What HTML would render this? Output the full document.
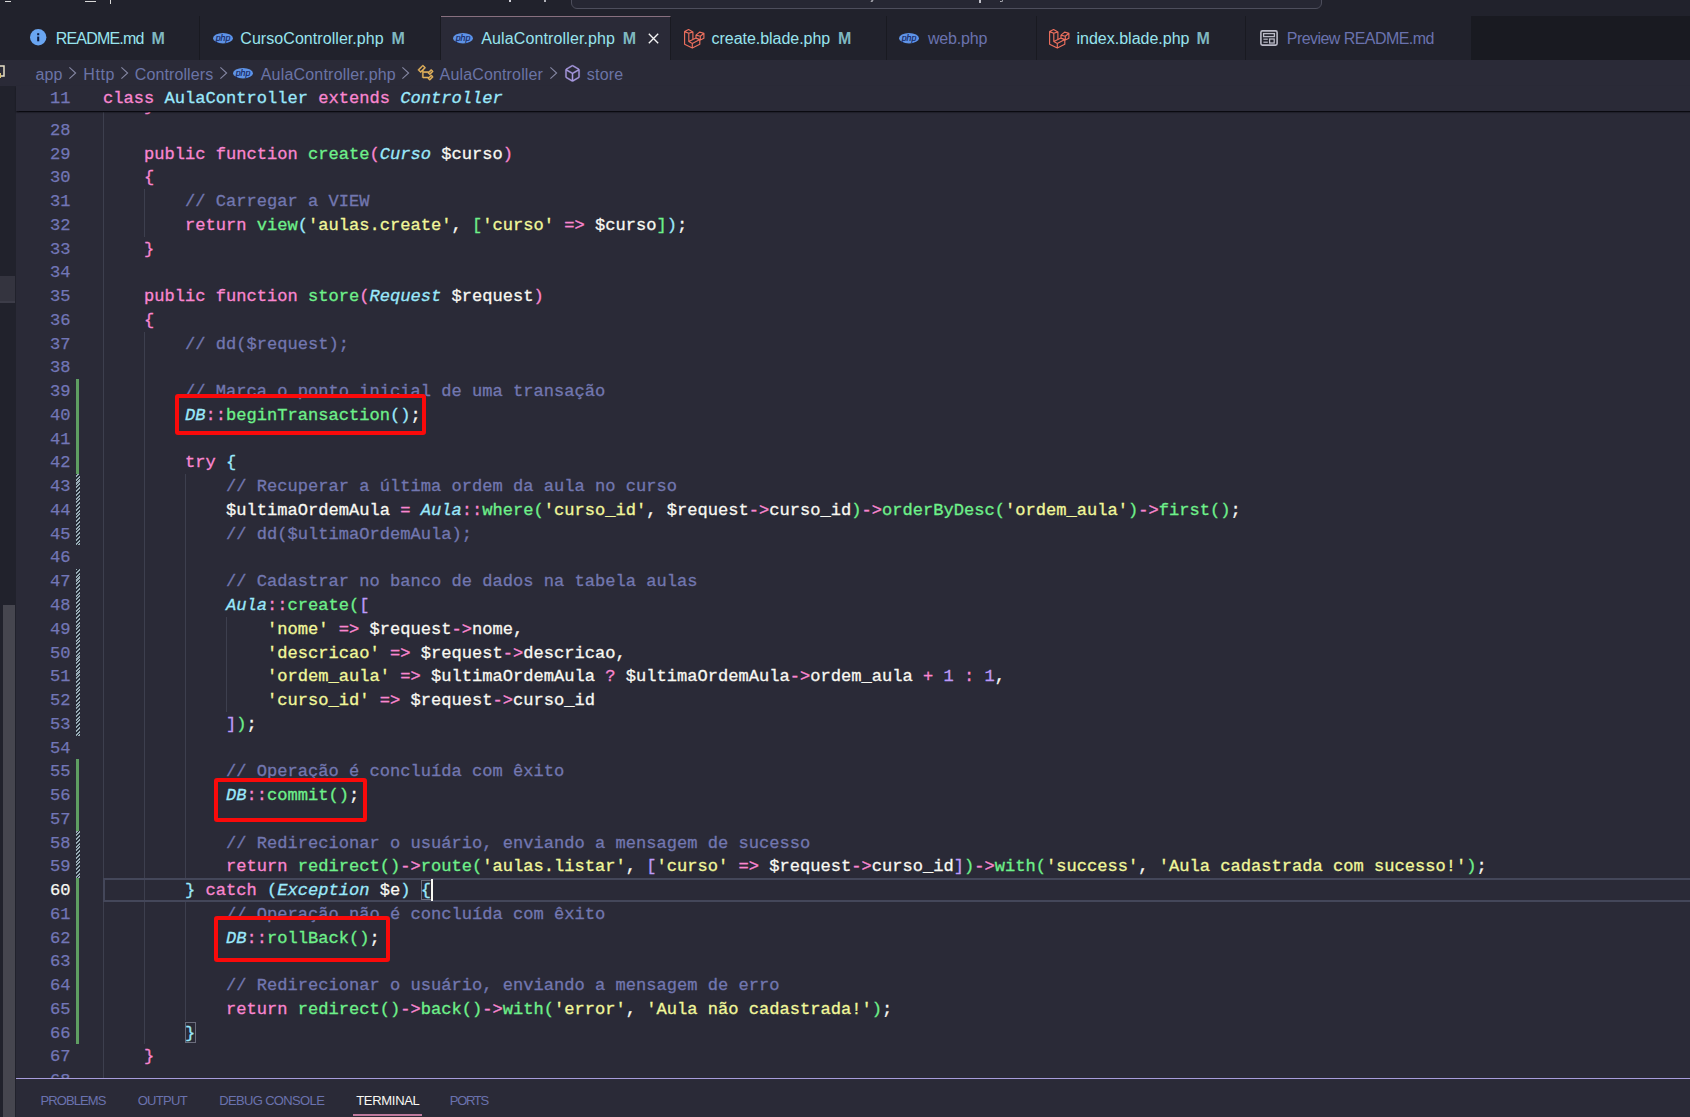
<!DOCTYPE html>
<html><head><meta charset="utf-8">
<style>
*{margin:0;padding:0;box-sizing:border-box}
html,body{width:1690px;height:1117px;overflow:hidden;background:#21222c;font-family:"Liberation Sans",sans-serif}
.abs{position:absolute}
svg{position:absolute;overflow:visible}
#title{left:0;top:0;width:1690px;height:16px;background:#21222c}
#search{left:571px;top:-12px;width:751px;height:21px;border:1px solid #4d4e5c;border-radius:6px;background:#262733}
#tabs{left:0;top:16px;width:1690px;height:44px;background:#191a21}
.tab{position:absolute;top:0;height:44px;background:#21222c;border-right:1px solid #191a21}
.tab.act{background:#2a2a37;border-top:1px solid #88707f}
.lbl{position:absolute;top:30px;font-size:16px;line-height:18px;color:#98e4ee;white-space:nowrap}
.m{position:absolute;top:29.5px;font-weight:bold;font-size:16px;line-height:18px;color:#7fb8c0}
#left{left:0;top:60px;width:16px;height:1057px;background:#21222c}
#crumb{left:0;top:60px;width:1690px;height:26px;background:#2a2a37}
.cb{position:absolute;top:65px;font-size:16px;line-height:20px;color:#6a74a6;white-space:nowrap}
#editor{left:0;top:0;width:1690px;height:1078px;background:#2a2a37;clip-path:inset(86px 0 0 16px)}
.l{position:absolute;margin-top:1px;-webkit-text-stroke:0.3px currentColor;left:103px;height:23.76px;line-height:23.76px;font-family:"Liberation Mono",monospace;font-size:17.0833px;color:#f8f8f2;white-space:pre}
.n{position:absolute;margin-top:1px;-webkit-text-stroke:0.25px currentColor;left:0;width:70.5px;text-align:right;height:23.76px;line-height:23.76px;font-family:"Liberation Mono",monospace;font-size:17.0833px;color:#7276b6;white-space:pre}
.n.cur{color:#f8f8f2}
.g{position:absolute;left:75.8px;width:3.5px}
.g.add{background:#5f9e62}
.g.mod{width:4.4px;background:repeating-linear-gradient(-45deg,#9aacb6 0 1.45px,#222a35 1.45px 2.66px)}
.ig{position:absolute;width:1px;background:#3d3f4e}
#sticky{left:16px;top:86px;width:1674px;height:25px;background:#2a2a37;box-shadow:0 1px 1.5px 0.5px #0a0a10}
#panel{left:16px;top:1078px;width:1674px;height:39px;background:#2a2a37;border-top:1.5px solid #a89ddc}
.pt{position:absolute;top:1094.3px;font-size:13px;line-height:14px;color:#6a72ae;white-space:nowrap}
.red{position:absolute;border:4.8px solid #fa0a0a;border-radius:3px}
.ch{position:absolute;top:68px}
</style></head><body>
<div id="title" class="abs"></div>
<div id="search" class="abs"></div>
<div class="abs" style="left:4.5px;top:0.5px;width:6.5px;height:1px;background:#d8d8d8"></div>
<div class="abs" style="left:84.5px;top:0.5px;width:11px;height:1px;background:#d8d8d8"></div>
<div class="abs" style="left:109.5px;top:0;width:1.2px;height:3.5px;background:#d8d8d8"></div>
<div class="abs" style="left:509px;top:0;width:2px;height:2px;background:#d0d0d8"></div>
<div class="abs" style="left:544px;top:0;width:1.5px;height:1.5px;background:#b0b0b8"></div>
<div class="abs" style="left:871px;top:0;width:1.5px;height:2px;background:#a0a0a8;transform:skewX(-30deg)"></div>
<div class="abs" style="left:979px;top:0;width:1.5px;height:3px;background:#c0c0c8"></div>
<div class="abs" style="left:1000px;top:0;width:3px;height:2px;border-bottom:1px solid #b0b0b8;border-right:1px solid #b0b0b8;border-radius:0 0 2px 0"></div>
<div id="tabs" class="abs">
  <div class="tab" style="left:0px;width:200px"></div>
  <div class="tab" style="left:200px;width:241px"></div>
  <div class="tab act" style="left:441px;width:230px"></div>
  <div class="tab" style="left:671px;width:216px"></div>
  <div class="tab" style="left:887px;width:150px"></div>
  <div class="tab" style="left:1037px;width:209px"></div>
  <div class="tab" style="left:1246px;width:226px"></div>
</div>
<!-- tab icons -->
<svg style="left:29.7px;top:29.4px" width="16.4" height="16.4" viewBox="0 0 16 16"><circle cx="8" cy="8" r="8" fill="#6aa6f2"/><rect x="7" y="4.1" width="2" height="2" fill="#0b1a3e"/><rect x="7" y="7.4" width="2" height="4.6" fill="#0b1a3e"/></svg>
<svg style="left:213.3px;top:32.8px" width="20" height="10.4" viewBox="0 0 20 10.4"><ellipse cx="10" cy="5.2" rx="10" ry="5.2" fill="#5f93e6"/><text x="10" y="7.9" text-anchor="middle" font-family="Liberation Sans" font-style="italic" font-size="8.8" fill="#14235a" stroke="#14235a" stroke-width="0.15">php</text></svg>
<svg style="left:452.8px;top:32.8px" width="20" height="10.4" viewBox="0 0 20 10.4"><ellipse cx="10" cy="5.2" rx="10" ry="5.2" fill="#5f93e6"/><text x="10" y="7.9" text-anchor="middle" font-family="Liberation Sans" font-style="italic" font-size="8.8" fill="#14235a" stroke="#14235a" stroke-width="0.15">php</text></svg>
<svg style="left:899px;top:32.8px" width="20" height="10.4" viewBox="0 0 20 10.4"><ellipse cx="10" cy="5.2" rx="10" ry="5.2" fill="#5f93e6"/><text x="10" y="7.9" text-anchor="middle" font-family="Liberation Sans" font-style="italic" font-size="8.8" fill="#14235a" stroke="#14235a" stroke-width="0.15">php</text></svg>

<svg style="left:683.8px;top:28.5px" width="20.5" height="19.5" viewBox="0 0 20.5 19.5"><path d="M0.6 2.6 L4.6 0.6 L8.9 2.9 L4.8 4.3 Z M0.6 2.6 V15.3 L8.3 19.1 L15.8 15.3 V10.6 M4.8 4.3 V12.6 L8.3 14.4 V19.1 M8.9 2.9 V10.7 M4.8 12.6 L12 9.1 M8.3 14.4 L15.8 10.6 M12 6.1 L15.6 3.1 L19.9 4.3 L16.3 7.3 Z M12 6.1 V9.1 L15.8 10.6 M16.3 7.3 V10.8 M19.9 4.3 V9.2 L15.8 11.2" fill="none" stroke="#ee705e" stroke-width="1.15" stroke-linejoin="round"/></svg>
<svg style="left:1048.8px;top:28.5px" width="20.5" height="19.5" viewBox="0 0 20.5 19.5"><path d="M0.6 2.6 L4.6 0.6 L8.9 2.9 L4.8 4.3 Z M0.6 2.6 V15.3 L8.3 19.1 L15.8 15.3 V10.6 M4.8 4.3 V12.6 L8.3 14.4 V19.1 M8.9 2.9 V10.7 M4.8 12.6 L12 9.1 M8.3 14.4 L15.8 10.6 M12 6.1 L15.6 3.1 L19.9 4.3 L16.3 7.3 Z M12 6.1 V9.1 L15.8 10.6 M16.3 7.3 V10.8 M19.9 4.3 V9.2 L15.8 11.2" fill="none" stroke="#ee705e" stroke-width="1.15" stroke-linejoin="round"/></svg>

<svg style="left:1260px;top:30px" width="18" height="16" viewBox="0 0 18 16"><rect x="0.9" y="0.9" width="16.2" height="14.2" rx="1.5" fill="none" stroke="#b9b9c6" stroke-width="1.6"/><rect x="3.6" y="3.6" width="10.8" height="3" fill="none" stroke="#b9b9c6" stroke-width="1.3"/><rect x="3.4" y="8.6" width="4.4" height="1.2" fill="#b9b9c6"/><rect x="3.4" y="11.6" width="4.4" height="1.2" fill="#b9b9c6"/><rect x="9.6" y="9" width="4.6" height="4" fill="none" stroke="#b9b9c6" stroke-width="1.3"/></svg>
<span class="lbl" style="left:55.7px;letter-spacing:-0.8px">README.md</span><span class="m" style="left:151.4px">M</span>
<span class="lbl" style="left:240.3px;letter-spacing:0.06px">CursoController.php</span><span class="m" style="left:391.5px">M</span>
<span class="lbl" style="left:481.3px;letter-spacing:0.12px">AulaController.php</span><span class="m" style="left:622.8px">M</span>
<svg style="left:648px;top:33px" width="11" height="11" viewBox="0 0 11 11"><path d="M0.8 0.8L10.2 10.2M10.2 0.8L0.8 10.2" stroke="#f4f4f4" stroke-width="1.35"/></svg>
<span class="lbl" style="left:711.6px;letter-spacing:-0.04px">create.blade.php</span><span class="m" style="left:838px">M</span>
<span class="lbl" style="left:928px;letter-spacing:-0.2px;color:#6a72ae">web.php</span>
<span class="lbl" style="left:1076.5px">index.blade.php</span><span class="m" style="left:1196.5px">M</span>
<span class="lbl" style="left:1286.8px;letter-spacing:-0.56px;color:#6a72ae">Preview README.md</span>
<div id="left" class="abs"></div>
<div class="abs" style="left:0;top:60px;width:16px;height:26px;background:#2a2a37"></div>
<div class="abs" style="left:0;top:275.7px;width:15px;height:27.6px;background:#34343f;border-bottom:2.5px solid #3c3c48"></div>
<div class="abs" style="left:3px;top:605px;width:12px;height:512px;background:#46464f"></div>
<div id="crumb" class="abs" style="left:16px;width:1674px"></div>
<svg style="left:-4px;top:65px" width="10" height="16" viewBox="0 0 10 16"><rect x="1" y="1" width="7" height="10" fill="none" stroke="#e8e0c8" stroke-width="1.5"/><rect x="3" y="8" width="2" height="5" fill="#d8c070"/></svg>
<span class="cb" style="left:35.4px;letter-spacing:0.2px">app</span>
<span class="cb" style="left:83.3px;letter-spacing:0.6px">Http</span>
<span class="cb" style="left:134.8px;letter-spacing:0.1px">Controllers</span>
<span class="cb" style="left:260.7px;letter-spacing:0.2px">AulaController.php</span>
<span class="cb" style="left:439.6px;letter-spacing:0.15px">AulaController</span>
<span class="cb" style="left:586.8px;letter-spacing:0.2px">store</span>
<svg style="left:69px;top:67px" width="7" height="12" viewBox="0 0 7 12"><path d="M0.4 0.4L6.6 6L0.4 11.6" fill="none" stroke="#8587a3" stroke-width="1.1"/></svg>
<svg style="left:121.30000000000001px;top:67px" width="7" height="12" viewBox="0 0 7 12"><path d="M0.4 0.4L6.6 6L0.4 11.6" fill="none" stroke="#8587a3" stroke-width="1.1"/></svg>
<svg style="left:219.8px;top:67px" width="7" height="12" viewBox="0 0 7 12"><path d="M0.4 0.4L6.6 6L0.4 11.6" fill="none" stroke="#8587a3" stroke-width="1.1"/></svg>
<svg style="left:402px;top:67px" width="7" height="12" viewBox="0 0 7 12"><path d="M0.4 0.4L6.6 6L0.4 11.6" fill="none" stroke="#8587a3" stroke-width="1.1"/></svg>
<svg style="left:549.8px;top:67px" width="7" height="12" viewBox="0 0 7 12"><path d="M0.4 0.4L6.6 6L0.4 11.6" fill="none" stroke="#8587a3" stroke-width="1.1"/></svg>

<svg style="left:232.9px;top:67.9px" width="20" height="10.4" viewBox="0 0 20 10.4"><ellipse cx="10" cy="5.2" rx="10" ry="5.2" fill="#5f93e6"/><text x="10" y="7.9" text-anchor="middle" font-family="Liberation Sans" font-style="italic" font-size="8.8" fill="#14235a" stroke="#14235a" stroke-width="0.15">php</text></svg>

<svg style="left:416.5px;top:64px" width="17.5" height="17.6" viewBox="0 0 16 16"><path fill="#e6b45c" stroke="#e6b45c" stroke-width="0.45" d="M11.34 9.71h.71l2.67-2.67v-.71L13.38 5h-.7l-1.82 1.81h-5V5.56l1.86-1.85V3l-2-2H5L1 5v.71l2 2h.71l1.14-1.15v5.79l.5.5H10v.52l1.33 1.34h.71l2.67-2.67v-.71L13.37 10h-.7l-1.86 1.85h-5v-4H10v.48l1.34 1.38zm1.69-3.65l.63.63-2 2-.63-.63 2-2zm0 5l.63.63-2 2-.63-.63 2-2zM3.35 6.65l-1.29-1.3 3.29-3.29 1.3 1.29-3.3 3.3z"/></svg>
<svg style="left:563px;top:63.5px" width="19" height="19" viewBox="0 0 16 16"><path fill="#a898e0" stroke="#a898e0" stroke-width="0.3" d="M13.51 4l-5-3h-1l-5 3-.49.86v6l.49.85 5 3h1l5-3 .49-.85v-6L13.51 4zm-6 9.56l-4.5-2.7V5.7l4.5 2.45v5.41zM3.27 4.7l4.74-2.84 4.74 2.84-4.74 2.59L3.27 4.7zm9.74 6.16l-4.5 2.7V8.15l4.5-2.45v5.16z"/></svg>
<div id="editor" class="abs">
<div class="ig" style="left:144.00px;top:189.08px;height:47.52px"></div>
<div class="ig" style="left:144.00px;top:331.64px;height:712.80px"></div>
<div class="ig" style="left:185.00px;top:474.20px;height:403.92px"></div>
<div class="ig" style="left:185.00px;top:901.88px;height:118.80px"></div>
<div class="ig" style="left:226.00px;top:616.76px;height:95.04px"></div>

<div class="g add" style="top:379.16px;height:95.04px"></div>
<div class="g mod" style="top:474.20px;height:71.28px"></div>
<div class="g mod" style="top:569.24px;height:166.32px"></div>
<div class="g add" style="top:759.32px;height:71.28px"></div>
<div class="g mod" style="top:830.60px;height:47.52px"></div>
<div class="g add" style="top:878.12px;height:166.32px"></div>

<div class="n" style="top:94.04px">27</div>
<div class="n" style="top:117.80px">28</div>
<div class="n" style="top:141.56px">29</div>
<div class="n" style="top:165.32px">30</div>
<div class="n" style="top:189.08px">31</div>
<div class="n" style="top:212.84px">32</div>
<div class="n" style="top:236.60px">33</div>
<div class="n" style="top:260.36px">34</div>
<div class="n" style="top:284.12px">35</div>
<div class="n" style="top:307.88px">36</div>
<div class="n" style="top:331.64px">37</div>
<div class="n" style="top:355.40px">38</div>
<div class="n" style="top:379.16px">39</div>
<div class="n" style="top:402.92px">40</div>
<div class="n" style="top:426.68px">41</div>
<div class="n" style="top:450.44px">42</div>
<div class="n" style="top:474.20px">43</div>
<div class="n" style="top:497.96px">44</div>
<div class="n" style="top:521.72px">45</div>
<div class="n" style="top:545.48px">46</div>
<div class="n" style="top:569.24px">47</div>
<div class="n" style="top:593.00px">48</div>
<div class="n" style="top:616.76px">49</div>
<div class="n" style="top:640.52px">50</div>
<div class="n" style="top:664.28px">51</div>
<div class="n" style="top:688.04px">52</div>
<div class="n" style="top:711.80px">53</div>
<div class="n" style="top:735.56px">54</div>
<div class="n" style="top:759.32px">55</div>
<div class="n" style="top:783.08px">56</div>
<div class="n" style="top:806.84px">57</div>
<div class="n" style="top:830.60px">58</div>
<div class="n" style="top:854.36px">59</div>
<div class="n cur" style="top:878.12px">60</div>
<div class="n" style="top:901.88px">61</div>
<div class="n" style="top:925.64px">62</div>
<div class="n" style="top:949.40px">63</div>
<div class="n" style="top:973.16px">64</div>
<div class="n" style="top:996.92px">65</div>
<div class="n" style="top:1020.68px">66</div>
<div class="n" style="top:1044.44px">67</div>
<div class="n" style="top:1068.20px">68</div>

<div class="l" style="top:94.04px">    <span style="color:#f986d0">}</span></div>
<div class="l" style="top:117.80px"></div>
<div class="l" style="top:141.56px">    <span style="color:#f986d0">public</span> <span style="color:#f986d0">function</span> <span style="color:#6ef08a">create</span><span style="color:#f986d0">(</span><span style="color:#9ae8fb;font-style:italic">Curso</span> <span style="color:#f8f8f2">$curso</span><span style="color:#f986d0">)</span></div>
<div class="l" style="top:165.32px">    <span style="color:#f986d0">{</span></div>
<div class="l" style="top:189.08px">        <span style="color:#7277b0">// Carregar a VIEW</span></div>
<div class="l" style="top:212.84px">        <span style="color:#f986d0">return</span> <span style="color:#6ef08a">view</span><span style="color:#9ae8fb">(</span><span style="color:#f1f79a">&#x27;aulas.create&#x27;</span><span style="color:#f8f8f2">,</span> <span style="color:#6ef08a">[</span><span style="color:#f1f79a">&#x27;curso&#x27;</span> <span style="color:#f986d0">=&gt;</span> <span style="color:#f8f8f2">$curso</span><span style="color:#6ef08a">]</span><span style="color:#9ae8fb">)</span><span style="color:#f8f8f2">;</span></div>
<div class="l" style="top:236.60px">    <span style="color:#f986d0">}</span></div>
<div class="l" style="top:260.36px"></div>
<div class="l" style="top:284.12px">    <span style="color:#f986d0">public</span> <span style="color:#f986d0">function</span> <span style="color:#6ef08a">store</span><span style="color:#f986d0">(</span><span style="color:#9ae8fb;font-style:italic">Request</span> <span style="color:#f8f8f2">$request</span><span style="color:#f986d0">)</span></div>
<div class="l" style="top:307.88px">    <span style="color:#f986d0">{</span></div>
<div class="l" style="top:331.64px">        <span style="color:#7277b0">// dd($request);</span></div>
<div class="l" style="top:355.40px"></div>
<div class="l" style="top:379.16px">        <span style="color:#7277b0">// Marca o ponto inicial de uma transação</span></div>
<div class="l" style="top:402.92px">        <span style="color:#9ae8fb;font-style:italic">DB</span><span style="color:#f986d0">::</span><span style="color:#6ef08a">beginTransaction</span><span style="color:#9ae8fb">(</span><span style="color:#9ae8fb">)</span><span style="color:#f8f8f2">;</span></div>
<div class="l" style="top:426.68px"></div>
<div class="l" style="top:450.44px">        <span style="color:#f986d0">try</span> <span style="color:#9ae8fb">{</span></div>
<div class="l" style="top:474.20px">            <span style="color:#7277b0">// Recuperar a última ordem da aula no curso</span></div>
<div class="l" style="top:497.96px">            <span style="color:#f8f8f2">$ultimaOrdemAula</span> <span style="color:#f986d0">=</span> <span style="color:#9ae8fb;font-style:italic">Aula</span><span style="color:#f986d0">::</span><span style="color:#6ef08a">where</span><span style="color:#6ef08a">(</span><span style="color:#f1f79a">&#x27;curso_id&#x27;</span><span style="color:#f8f8f2">,</span> <span style="color:#f8f8f2">$request</span><span style="color:#f986d0">-&gt;</span><span style="color:#f8f8f2">curso_id</span><span style="color:#6ef08a">)</span><span style="color:#f986d0">-&gt;</span><span style="color:#6ef08a">orderByDesc</span><span style="color:#6ef08a">(</span><span style="color:#f1f79a">&#x27;ordem_aula&#x27;</span><span style="color:#6ef08a">)</span><span style="color:#f986d0">-&gt;</span><span style="color:#6ef08a">first</span><span style="color:#6ef08a">(</span><span style="color:#6ef08a">)</span><span style="color:#f8f8f2">;</span></div>
<div class="l" style="top:521.72px">            <span style="color:#7277b0">// dd($ultimaOrdemAula);</span></div>
<div class="l" style="top:545.48px"></div>
<div class="l" style="top:569.24px">            <span style="color:#7277b0">// Cadastrar no banco de dados na tabela aulas</span></div>
<div class="l" style="top:593.00px">            <span style="color:#9ae8fb;font-style:italic">Aula</span><span style="color:#f986d0">::</span><span style="color:#6ef08a">create</span><span style="color:#6ef08a">(</span><span style="color:#bd9af9">[</span></div>
<div class="l" style="top:616.76px">                <span style="color:#f1f79a">&#x27;nome&#x27;</span> <span style="color:#f986d0">=&gt;</span> <span style="color:#f8f8f2">$request</span><span style="color:#f986d0">-&gt;</span><span style="color:#f8f8f2">nome</span><span style="color:#f8f8f2">,</span></div>
<div class="l" style="top:640.52px">                <span style="color:#f1f79a">&#x27;descricao&#x27;</span> <span style="color:#f986d0">=&gt;</span> <span style="color:#f8f8f2">$request</span><span style="color:#f986d0">-&gt;</span><span style="color:#f8f8f2">descricao</span><span style="color:#f8f8f2">,</span></div>
<div class="l" style="top:664.28px">                <span style="color:#f1f79a">&#x27;ordem_aula&#x27;</span> <span style="color:#f986d0">=&gt;</span> <span style="color:#f8f8f2">$ultimaOrdemAula</span> <span style="color:#f986d0">?</span> <span style="color:#f8f8f2">$ultimaOrdemAula</span><span style="color:#f986d0">-&gt;</span><span style="color:#f8f8f2">ordem_aula</span> <span style="color:#f986d0">+</span> <span style="color:#bd9af9">1</span> <span style="color:#f986d0">:</span> <span style="color:#bd9af9">1</span><span style="color:#f8f8f2">,</span></div>
<div class="l" style="top:688.04px">                <span style="color:#f1f79a">&#x27;curso_id&#x27;</span> <span style="color:#f986d0">=&gt;</span> <span style="color:#f8f8f2">$request</span><span style="color:#f986d0">-&gt;</span><span style="color:#f8f8f2">curso_id</span></div>
<div class="l" style="top:711.80px">            <span style="color:#bd9af9">]</span><span style="color:#6ef08a">)</span><span style="color:#f8f8f2">;</span></div>
<div class="l" style="top:735.56px"></div>
<div class="l" style="top:759.32px">            <span style="color:#7277b0">// Operação é concluída com êxito</span></div>
<div class="l" style="top:783.08px">            <span style="color:#9ae8fb;font-style:italic">DB</span><span style="color:#f986d0">::</span><span style="color:#6ef08a">commit</span><span style="color:#6ef08a">(</span><span style="color:#6ef08a">)</span><span style="color:#f8f8f2">;</span></div>
<div class="l" style="top:806.84px"></div>
<div class="l" style="top:830.60px">            <span style="color:#7277b0">// Redirecionar o usuário, enviando a mensagem de sucesso</span></div>
<div class="l" style="top:854.36px">            <span style="color:#f986d0">return</span> <span style="color:#6ef08a">redirect</span><span style="color:#6ef08a">(</span><span style="color:#6ef08a">)</span><span style="color:#f986d0">-&gt;</span><span style="color:#6ef08a">route</span><span style="color:#6ef08a">(</span><span style="color:#f1f79a">&#x27;aulas.listar&#x27;</span><span style="color:#f8f8f2">,</span> <span style="color:#bd9af9">[</span><span style="color:#f1f79a">&#x27;curso&#x27;</span> <span style="color:#f986d0">=&gt;</span> <span style="color:#f8f8f2">$request</span><span style="color:#f986d0">-&gt;</span><span style="color:#f8f8f2">curso_id</span><span style="color:#bd9af9">]</span><span style="color:#6ef08a">)</span><span style="color:#f986d0">-&gt;</span><span style="color:#6ef08a">with</span><span style="color:#6ef08a">(</span><span style="color:#f1f79a">&#x27;success&#x27;</span><span style="color:#f8f8f2">,</span> <span style="color:#f1f79a">&#x27;Aula cadastrada com sucesso!&#x27;</span><span style="color:#6ef08a">)</span><span style="color:#f8f8f2">;</span></div>
<div class="l" style="top:878.12px">        <span style="color:#9ae8fb">}</span> <span style="color:#f986d0">catch</span> <span style="color:#9ae8fb">(</span><span style="color:#9ae8fb;font-style:italic">Exception</span> <span style="color:#f8f8f2">$e</span><span style="color:#9ae8fb">)</span> <span style="color:#9ae8fb">{</span></div>
<div class="l" style="top:901.88px">            <span style="color:#7277b0">// Operação não é concluída com êxito</span></div>
<div class="l" style="top:925.64px">            <span style="color:#9ae8fb;font-style:italic">DB</span><span style="color:#f986d0">::</span><span style="color:#6ef08a">rollBack</span><span style="color:#6ef08a">(</span><span style="color:#6ef08a">)</span><span style="color:#f8f8f2">;</span></div>
<div class="l" style="top:949.40px"></div>
<div class="l" style="top:973.16px">            <span style="color:#7277b0">// Redirecionar o usuário, enviando a mensagem de erro</span></div>
<div class="l" style="top:996.92px">            <span style="color:#f986d0">return</span> <span style="color:#6ef08a">redirect</span><span style="color:#6ef08a">(</span><span style="color:#6ef08a">)</span><span style="color:#f986d0">-&gt;</span><span style="color:#6ef08a">back</span><span style="color:#6ef08a">(</span><span style="color:#6ef08a">)</span><span style="color:#f986d0">-&gt;</span><span style="color:#6ef08a">with</span><span style="color:#6ef08a">(</span><span style="color:#f1f79a">&#x27;error&#x27;</span><span style="color:#f8f8f2">,</span> <span style="color:#f1f79a">&#x27;Aula não cadastrada!&#x27;</span><span style="color:#6ef08a">)</span><span style="color:#f8f8f2">;</span></div>
<div class="l" style="top:1020.68px">        <span style="color:#9ae8fb">}</span></div>
<div class="l" style="top:1044.44px">    <span style="color:#f986d0">}</span></div>
<div class="l" style="top:1068.20px"></div>

<div class="ig" style="left:103px;top:86px;height:992px"></div>
<div style="position:absolute;left:103px;top:877.62px;width:1600px;height:24.26px;border:2px solid #44475a"></div>
<div style="position:absolute;left:420.75px;top:879.62px;width:10.75px;height:20.76px;border:1px solid #6b6d7c"></div>
<div style="position:absolute;left:185.00px;top:1021.68px;width:10.75px;height:21.76px;border:1px solid #6b6d7c"></div>
<div style="position:absolute;left:430.50px;top:879.12px;width:2px;height:21.76px;background:#f8f8f2"></div>

</div>
<div id="sticky" class="abs"></div>
<div class="n" style="top:86px">11</div><div class="l" style="top:86px"><span style="color:#f986d0">class</span> <span style="color:#9ae8fb">AulaController</span> <span style="color:#f986d0">extends</span> <span style="color:#9ae8fb;font-style:italic">Controller</span></div>

<div id="panel" class="abs"></div>
<span class="pt" style="left:40.5px;letter-spacing:-0.9px">PROBLEMS</span>
<span class="pt" style="left:137.7px;letter-spacing:-0.7px">OUTPUT</span>
<span class="pt" style="left:219.2px;letter-spacing:-0.65px">DEBUG CONSOLE</span>
<span class="pt" style="left:356.2px;color:#f8f8f2;letter-spacing:-0.3px">TERMINAL</span>
<span class="pt" style="left:449.8px;letter-spacing:-1.3px">PORTS</span>
<div class="abs" style="left:353px;top:1114.3px;width:69px;height:1.7px;background:#c27a9e"></div>
<div class="red" style="left:175.4px;top:394.3px;width:250.7px;height:41.1px"></div>
<div class="red" style="left:213.9px;top:777.9px;width:152.7px;height:44px"></div>
<div class="red" style="left:214.3px;top:915.9px;width:175.6px;height:46.1px"></div>
</body></html>
